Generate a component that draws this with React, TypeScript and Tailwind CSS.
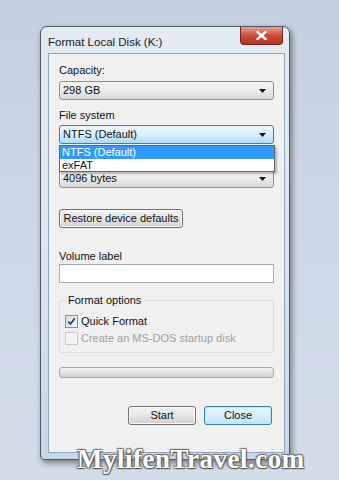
import React from "react"

const font = "font-['Liberation_Sans',Arial,sans-serif]"

function Arrow() {
  return (
    <svg width="7" height="4" viewBox="0 0 7 4" className="shrink-0">
      <path d="M0 0h7L3.5 4z" fill="#111" />
    </svg>
  )
}

function Combo({ value, active }: { value: string; active?: boolean }) {
  return (
    <div
      className={
        "h-[19px] w-[215px] rounded-[3px] border flex items-center pl-[3px] pr-[7px] text-[11px] text-[#111] " +
        (active
          ? "border-[#3c7fb1] bg-gradient-to-b from-[#eaf6fd] via-[#d9f0fc] to-[#a9dbf6]"
          : "border-[#8e8f8f] bg-gradient-to-b from-[#f4f4f4] via-[#ebebeb] to-[#d8d8d8]")
      }
    >
      <span className="flex-1 leading-none">{value}</span>
      <Arrow />
    </div>
  )
}

function Button({ label, width, focused }: { label: string; width: string; focused?: boolean }) {
  return (
    <div
      className={
        "h-[19px] rounded-[3px] border flex items-center justify-center whitespace-nowrap text-[11px] text-[#111] " +
        width +
        (focused
          ? " border-[#3c7fb1] bg-gradient-to-b from-[#eaf6fd] via-[#d6eefb] to-[#bfe4f7] shadow-[inset_0_0_0_1px_#bfe7f8]"
          : " border-[#707070] bg-gradient-to-b from-[#f2f2f2] via-[#e6e6e6] to-[#d0d0d0] shadow-[inset_0_0_0_1px_#fcfcfc]")
      }
    >
      {label}
    </div>
  )
}

export default function App() {
  return (
    <div className={"relative w-[339px] h-[480px] overflow-hidden bg-gradient-to-b from-[#c4d0e0] via-[#cdd8e7] to-[#d3dde9] pt-[26px] pl-[40px] " + font}>
      {/* window */}
      <div className="w-[250px] h-[434px] rounded-t-[7px] rounded-b-[4px] border border-[#4d5866] bg-gradient-to-b from-[#e4eaf2] via-[#dde5ee] to-[#c9d6e6] shadow-[2px_3px_6px_rgba(0,0,0,0.45)] flex flex-col">
        {/* title bar */}
        <div className="relative h-[26px] shrink-0">
          <span className="absolute left-[7px] top-[8px] text-[11.5px] leading-[14px] text-[#1a1a1a]">Format Local Disk (K:)</span>
          <div className="absolute left-[199px] top-0 w-[43px] h-[18px] rounded-b-[4px] border border-t-0 border-[#6b2a22] bg-gradient-to-b from-[#e6a195] via-[#cc4b3a] to-[#b8321f] flex items-center justify-center">
            <svg width="11" height="9" viewBox="0 0 11 9">
              <path d="M1.5 1l8 7M9.5 1l-8 7" stroke="#fff" strokeWidth="2.4" strokeLinecap="square" />
            </svg>
          </div>
        </div>

        {/* client area */}
        <div className="ml-[7px] mr-[5px] w-[237px] h-[400px] border border-[#8fa6c0] bg-[#f0f0f0] pl-[10px] flex flex-col text-[11px] text-[#111]">
          <div className="mt-[9px] h-[14px] leading-[14px]">Capacity:</div>
          <div className="mt-[4px]">
            <Combo value="298 GB" />
          </div>
          <div className="mt-[8px] h-[14px] leading-[14px]">File system</div>
          <div className="relative mt-[3px]">
            <Combo value="NTFS (Default)" active />
            {/* dropdown list, covers the allocation unit label */}
            <div className="absolute left-0 top-[20px] z-10 w-[216px] h-[27px] border border-[#646464] bg-white shadow-[2px_2px_2px_rgba(0,0,0,0.25)]">
              <div className="h-[13px] leading-[13px] pl-[2px] bg-[#3399ff] text-white">NTFS (Default)</div>
              <div className="h-[12px] leading-[12px] pl-[2px]">exFAT</div>
            </div>
          </div>
          <div className="mt-[6px] h-[14px]" />
          <div className="mt-[5px]">
            <Combo value="4096 bytes" />
          </div>
          <div className="mt-[21px]">
            <Button label="Restore device defaults" width="w-[124px]" />
          </div>
          <div className="mt-[21px] h-[14px] leading-[14px]">Volume label</div>
          <div className="mt-[1px] h-[19px] w-[215px] border border-[#abadb3] border-t-[#a0a3aa] bg-white" />

          {/* group box */}
          <div className="relative mt-[17px] w-[215px] h-[53px] rounded-[3px] border border-[#d5dfe5] pt-[13px] pl-[5px]">
            <span className="absolute left-[6px] -top-[8px] bg-[#f0f0f0] px-[2px] leading-[14px]">Format options</span>
            <div className="flex items-center gap-[3px] h-[14px]">
              <div className="w-[13px] h-[13px] border border-[#8e8f8f] bg-gradient-to-br from-[#dcdcdc] to-[#f8f8f8] flex items-center justify-center">
                <svg width="9" height="9" viewBox="0 0 9 9">
                  <path d="M1.2 4.5l2.2 2.6L7.8 1.2" fill="none" stroke="#25407a" strokeWidth="1.7" />
                </svg>
              </div>
              <span className="leading-[14px]">Quick Format</span>
            </div>
            <div className="flex items-center gap-[3px] h-[14px] mt-[3px]">
              <div className="w-[13px] h-[13px] border border-[#c8c8c8] bg-[#f4f4f4]" />
              <span className="leading-[14px] text-[#a0a0a0]">Create an MS-DOS startup disk</span>
            </div>
          </div>

          {/* progress */}
          <div className="mt-[14px] w-[215px] h-[11px] rounded-[3px] border border-[#a8a8a8] bg-gradient-to-b from-[#f2f2f2] via-[#e2e2e2] to-[#cfcfcf]" />

          {/* buttons */}
          <div className="mt-[28px] flex gap-[8px] pl-[69px]">
            <Button label="Start" width="w-[68px]" />
            <Button label="Close" width="w-[68px]" focused />
          </div>
        </div>
      </div>

      {/* watermark */}
      <div className="absolute left-[77px] top-[444px] text-[27px] leading-[30px] tracking-[0.5px] text-white font-['Liberation_Serif',serif] font-bold [text-shadow:1px_1px_1px_#555,-1px_-1px_1px_#777,1px_-1px_1px_#777,-1px_1px_1px_#777]">
        MylifenTravel.com
      </div>
    </div>
  )
}
